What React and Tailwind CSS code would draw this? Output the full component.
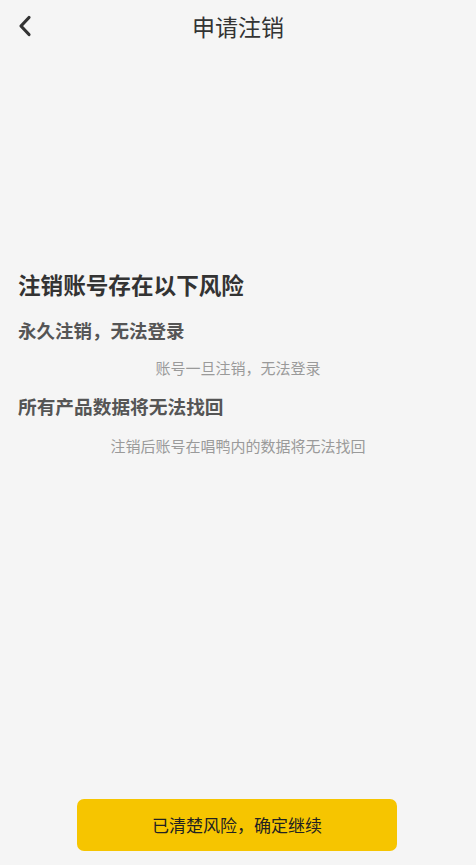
import React from "react";

const font = { fontFamily: '"Noto Sans CJK SC", "Noto Sans", sans-serif' };

function BackIcon() {
  return (
    <svg width="14" height="22" viewBox="0 0 14 22" fill="none">
      <path
        d="M11 2.5 L3 11 L11 19.5"
        stroke="#333333"
        strokeWidth="3.2"
        strokeLinecap="round"
        strokeLinejoin="round"
      />
    </svg>
  );
}

export default function App() {
  return (
    <div
      className="w-[476px] h-[865px] bg-[#f5f5f5] flex flex-col overflow-hidden"
      style={font}
    >
      <div className="relative h-[54px] flex items-center justify-center">
        <button className="absolute left-[18px] top-[15px]">
          <BackIcon />
        </button>
        <p className="text-[23px] text-[#333333] leading-none -mt-[2px]">申请注销</p>
      </div>

      <div className="flex flex-col px-[18px] pt-[216px]">
        <p className="text-[22.6px] font-bold text-[#333333] leading-[30px]">
          注销账号存在以下风险
        </p>
        <p className="mt-[17px] text-[18.5px] font-bold text-[#555555] leading-[26px]">
          永久注销，无法登录
        </p>
        <p className="mt-[15px] text-center text-[15px] text-[#9a9a9a] leading-[20px]">
          账号一旦注销，无法登录
        </p>
        <p className="mt-[15px] text-[18.7px] font-bold text-[#555555] leading-[26px]">
          所有产品数据将无法找回
        </p>
        <p className="mt-[17px] text-center text-[15px] text-[#9a9a9a] leading-[20px]">
          注销后账号在唱鸭内的数据将无法找回
        </p>
      </div>

      <div className="flex-1" />

      <div className="flex pl-[77px] pb-[14px]">
        <button className="w-[320px] h-[52px] rounded-[7px] bg-[#f6c500] text-[17px] text-[#222222]">
          已清楚风险，确定继续
        </button>
      </div>
    </div>
  );
}
